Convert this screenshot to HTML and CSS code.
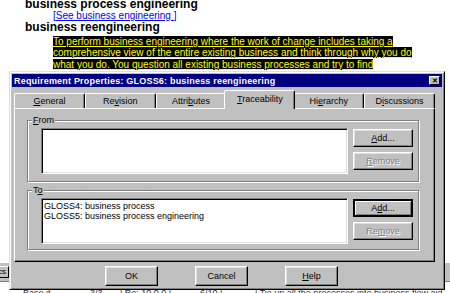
FILE: index.html
```html
<!DOCTYPE html>
<html lang="en">

<head>
    <meta charset="UTF-8" />
    <title>Requirement Properties</title>
    <link rel="stylesheet" href="styles.css">
</head>

<body>

    <!-- Glossary document behind the dialog -->
    <div class="page">
        <div class="doc">
            <div class="term">business process engineering</div>
            <div class="def"><span class="link">[<u>See business engineering </u>]</span></div>
            <div class="term">business reengineering</div>
            <div class="def def-mark">
                <span class="mark">To perform business engineering where the work of change includes taking a<br>comprehensive view of the entire existing business and think through why you do<br>what you do. You question all existing business processes and try to find</span>
            </div>
        </div>
        <div class="fill"></div>
        <div class="toolbar">
            <span class="tool">cs</span>
        </div>
        <div class="grid-row">
            <span class="cell c1">Base it</span>
            <span class="cell c2">3/3</span>
            <span class="cell c3">| Re: 10.0.0 |</span>
            <span class="cell c4">6/10 |</span>
            <span class="cell c5">| Tie up all the processes into business flow aid</span>
        </div>
    </div>

    <!-- Requirement Properties dialog -->
    <div class="dialog">
        <div class="titlebar">
            <span class="title">Requirement Properties: GLOSS6: business reengineering</span>
            <span class="close">&#x2715;</span>
        </div>

        <div class="tabs">
            <div class="tab"><u>G</u>eneral</div>
            <div class="tab">Re<u>v</u>ision</div>
            <div class="tab">Attri<u>b</u>utes</div>
            <div class="tab active"><u>T</u>raceability</div>
            <div class="tab">Hi<u>e</u>rarchy</div>
            <div class="tab">D<u>i</u>scussions</div>
        </div>

        <div class="panel">
            <div class="group">
                <span class="group-label"><u>F</u>rom</span>
                <div class="list"></div>
                <div class="side-buttons">
                    <button class="btn"><u>A</u>dd...</button>
                    <button class="btn" disabled><u>R</u>emove</button>
                </div>
            </div>

            <div class="group group-to">
                <span class="group-label">T<u>o</u></span>
                <div class="list">
                    <div class="item">GLOSS4: business process</div>
                    <div class="item">GLOSS5: business process engineering</div>
                </div>
                <div class="side-buttons">
                    <button class="btn default">A<u>d</u>d...</button>
                    <button class="btn" disabled>Re<u>m</u>ove</button>
                </div>
            </div>
        </div>

        <div class="footer">
            <button class="btn big">OK</button>
            <button class="btn big">Cancel</button>
            <button class="btn big"><u>H</u>elp</button>
        </div>
    </div>

</body>

</html>
```

FILE: styles.css
```css
* {
    box-sizing: border-box;
}

body {
    margin: 0;
    width: 450px;
    height: 293px;
    overflow: hidden;
    background-color: #fff;
    font-family: "Liberation Sans", Arial, sans-serif;
    position: relative;
}

.page {
    height: 293px;
    display: flex;
    flex-direction: column;
}

/* Glossary text */
.doc {
    padding-left: 25px;
    margin-top: -2px;
}

.term {
    font-size: 12px;
    font-weight: bold;
    line-height: 12px;
    color: #000;
}

.def {
    padding-left: 28px;
    font-size: 10px;
    line-height: 11px;
}

.link {
    color: #0000ff;
}

.link u {
    text-decoration-color: #0000ff;
}

.def-mark {
    margin-top: 3px;
    line-height: 11.3px;
}

.mark {
    background-color: #000;
    color: #ffff00;
    text-decoration: underline;
}

.fill {
    flex: 1;
}

.toolbar {
    height: 20px;
    background-color: #c0c0c0;
    border-top: 1px solid #fff;
    border-bottom: 1px solid #808080;
    display: flex;
    align-items: center;
}

.tool {
    width: 22px;
    height: 12px;
    margin-left: -13px;
    border: 1px solid;
    border-color: #fff #000 #000 #fff;
    font-size: 8px;
    line-height: 10px;
    text-align: right;
    padding-right: 2px;
}

.grid-row {
    height: 11px;
    display: flex;
    font-size: 9px;
    line-height: 12px;
    padding-top: 5px;
    color: #333;
}

.cell.c1 { margin-left: 23px; width: 67px; }
.cell.c2 { width: 30px; }
.cell.c3 { width: 80px; }
.cell.c4 { width: 55px; }

/* Dialog */
.dialog {
    position: absolute;
    left: 9px;
    top: 71px;
    width: 436px;
    height: 219px;
    background-color: #c0c0c0;
    border: 1px solid;
    border-color: #dfdfdf #000 #000 #dfdfdf;
    box-shadow: inset 1px 1px #fff, inset -1px -1px #808080;
    padding: 2px;
    display: flex;
    flex-direction: column;
    font-size: 9px;
    color: #000;
}

.titlebar {
    height: 13px;
    background-color: #000080;
    color: #fff;
    display: flex;
    align-items: center;
    justify-content: space-between;
    padding: 0 2px 0 2px;
}

.title {
    font-weight: bold;
    font-size: 9px;
    letter-spacing: 0.2px;
}

.close {
    width: 11px;
    height: 9px;
    background-color: #c0c0c0;
    color: #000;
    border: 1px solid;
    border-color: #fff #000 #000 #fff;
    font-size: 7px;
    font-weight: bold;
    line-height: 7px;
    text-align: center;
}

.tabs {
    height: 19px;
    margin: 2px 7px 0 2px;
    display: flex;
    align-items: flex-end;
}

.tab {
    flex: 1;
    height: 15px;
    border: 1px solid;
    border-bottom: none;
    border-color: #fff #000 transparent #fff;
    border-radius: 2px 2px 0 0;
    box-shadow: inset -1px 0 #808080;
    text-align: center;
    line-height: 14px;
    color: #000;
}

.tab.active {
    height: 19px;
    margin: 0 -2px -1px;
    background-color: #c0c0c0;
    position: relative;
    z-index: 1;
    line-height: 16px;
}

.panel {
    height: 154px;
    margin: 0 7px 0 2px;
    border: 1px solid;
    border-color: #fff #000 #000 #fff;
    box-shadow: inset -1px -1px #808080;
    padding: 11px 0 0 12px;
    display: flex;
    flex-direction: column;
    gap: 8px;
}

.group {
    width: 392px;
    height: 62px;
    border: 1px solid #808080;
    box-shadow: inset 1px 1px #fff, 1px 1px #fff;
    position: relative;
    display: flex;
    gap: 5px;
    padding: 7px 0 0 13px;
}

.group-to {
    height: 60px;
}

.group-label {
    position: absolute;
    top: -6px;
    left: 4px;
    padding: 0 1px 0 1px;
    background-color: #c0c0c0;
    line-height: 10px;
}

.list {
    width: 307px;
    height: 46px;
    background-color: #fff;
    border: 1px solid;
    border-color: #808080 #fff #fff #808080;
    box-shadow: inset 1px 1px #000, inset -1px -1px #dfdfdf;
    padding: 2px 2px;
}

.item {
    line-height: 10px;
    white-space: nowrap;
}

.side-buttons {
    display: flex;
    flex-direction: column;
    gap: 5px;
    padding-top: 1px;
}

.btn {
    width: 60px;
    height: 18px;
    padding: 0;
    background-color: #c0c0c0;
    border: 1px solid;
    border-color: #fff #000 #000 #fff;
    box-shadow: inset -1px -1px #808080, inset 1px 1px #dfdfdf;
    font-family: "Liberation Sans", Arial, sans-serif;
    font-size: 9px;
    color: #000;
    border-radius: 0;
}

.btn.default {
    border: 2px solid #000;
    box-shadow: inset 1px 1px #fff, inset -1px -1px #808080;
}

.btn:disabled {
    color: #808080;
    text-shadow: 1px 1px #fff;
}

.footer {
    display: flex;
    gap: 37px;
    padding: 4px 0 0 93px;
}

.btn.big {
    width: 53px;
    height: 20px;
}
```
